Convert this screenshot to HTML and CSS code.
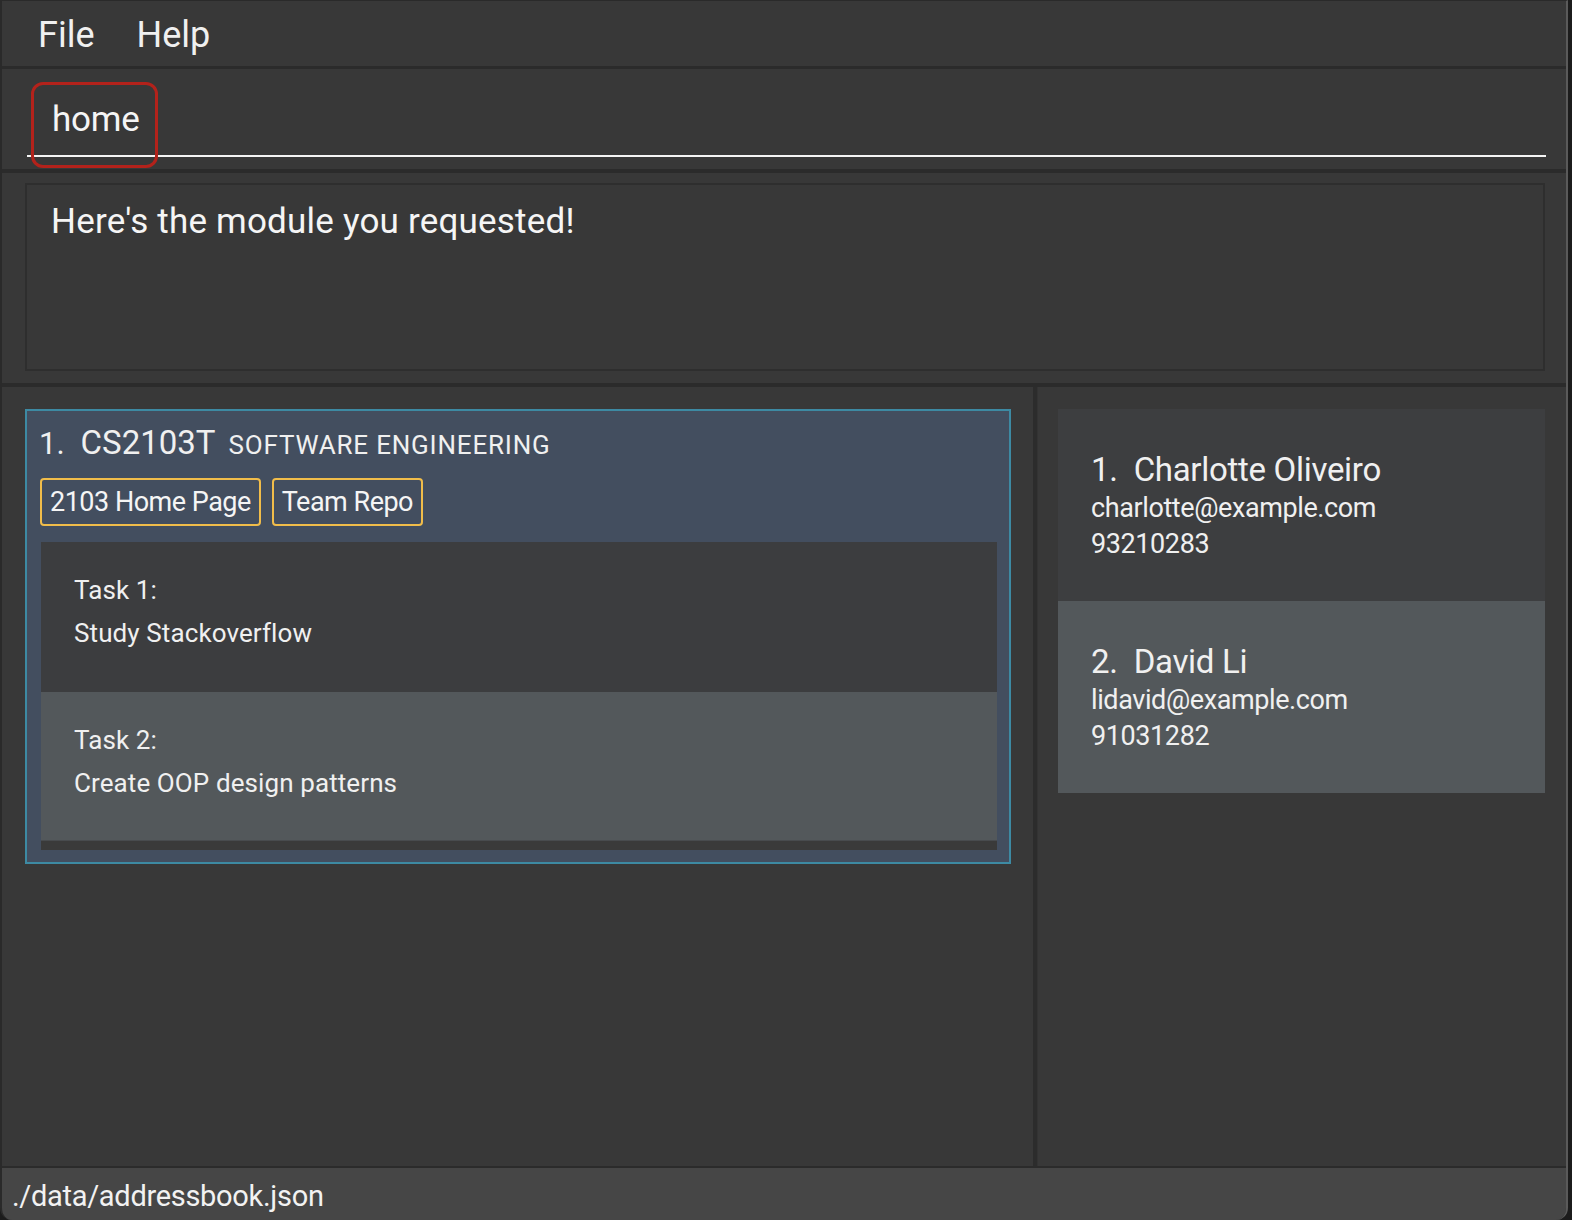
FILE: index.html
```html
<!DOCTYPE html>
<html>
<head>
<meta charset="utf-8">
<link rel="stylesheet" href="styles.css">
</head>
<body>
<div class="app">
  <div class="menubar">
    <span class="menu-item">File</span>
    <span class="menu-item">Help</span>
  </div>
  <div class="command-pane">
    <div class="command-field">
      <span class="command-text">home</span>
      <span class="highlight"></span>
    </div>
  </div>
  <div class="result-pane">
    <div class="result-box">Here's the module you requested!</div>
  </div>
  <div class="main">
    <div class="left-panel">
      <div class="module-card">
        <div class="module-title">
          <span class="module-index">1.</span>
          <span class="module-code">CS2103T</span>
          <span class="module-name">SOFTWARE ENGINEERING</span>
        </div>
        <div class="tags">
          <span class="tag">2103 Home Page</span>
          <span class="tag">Team Repo</span>
        </div>
        <div class="task-list">
          <div class="task odd">
            <div class="task-label">Task 1:</div>
            <div class="task-desc">Study Stackoverflow</div>
          </div>
          <div class="task even">
            <div class="task-label">Task 2:</div>
            <div class="task-desc">Create OOP design patterns</div>
          </div>
          <div class="task-rest"></div>
        </div>
      </div>
    </div>
    <div class="divider"></div>
    <div class="right-panel">
      <div class="person odd">
        <div class="person-name"><span class="person-index">1.</span>Charlotte Oliveiro</div>
        <div class="person-line">charlotte@example.com</div>
        <div class="person-line">93210283</div>
      </div>
      <div class="person even">
        <div class="person-name"><span class="person-index">2.</span>David Li</div>
        <div class="person-line">lidavid@example.com</div>
        <div class="person-line">91031282</div>
      </div>
    </div>
  </div>
  <div class="statusbar">./data/addressbook.json</div>
</div>
</body>
</html>
```

FILE: styles.css
```css
* { box-sizing: border-box; }
html, body { margin: 0; padding: 0; }
body {
  width: 1572px;
  height: 1220px;
  background: #1c1c1c;
  font-family: Roboto, "Liberation Sans", sans-serif;
  color: #f2f2f2;
  overflow: hidden;
}
.app {
  width: 1568px;
  height: 1220px;
  background: #383838;
  border-left: 2px solid #2a2a2a;
  border-right: 2px solid #5a5a5a;
  border-top: 1px solid #2a2a2a;
  border-bottom-left-radius: 12px;
  border-bottom-right-radius: 12px;
  display: flex;
  flex-direction: column;
  overflow: hidden;
}
.menubar {
  height: 68px;
  display: flex;
  align-items: center;
  gap: 42px;
  padding-left: 36px;
  padding-top: 3px;
  border-bottom: 3px solid #2b2b2b;
  flex: none;
}
.menu-item {
  font-size: 36px;
  color: #f0f0f0;
}
.command-pane {
  height: 104px;
  padding: 12px 20px 0 25px;
  border-bottom: 4px solid #2b2b2b;
  flex: none;
}
.command-field {
  position: relative;
  height: 76px;
  border-bottom: 2px solid #f4f4f4;
  padding-left: 25px;
  padding-top: 18px;
}
.command-text {
  font-size: 35px;
  letter-spacing: -0.2px;
  color: #f5f5f5;
}
.highlight {
  position: absolute;
  left: 4px;
  top: 1px;
  width: 127px;
  height: 86px;
  border: 3px solid #b3221b;
  border-radius: 12px;
}
.result-pane {
  height: 214px;
  padding: 10px 21px 10px 23px;
  border-bottom: 4px solid #2b2b2b;
  flex: none;
}
.result-box {
  height: 188px;
  border: 2px solid #2e2e2e;
  padding: 16px 24px;
  font-size: 35px;
  letter-spacing: 0.2px;
  color: #f5f5f5;
}
.main {
  flex: 1;
  display: flex;
  min-height: 0;
}
.left-panel {
  width: 1031px;
  padding: 22px 22px 0 23px;
  flex: none;
}
.divider {
  width: 5px;
  background: #2c2c2c;
  border-right: 1px solid #333;
  flex: none;
}
.right-panel {
  flex: 1;
  padding: 22px 21px 0 20px;
}
.module-card {
  background: #434e5f;
  border: 2px solid #3d8aa3;
  padding: 9px 13px 13px 12px;
  height: 455px;
}
.module-title {
  display: flex;
  align-items: baseline;
  height: 58px;
  padding-top: 3px;
}
.module-index {
  font-size: 31px;
  margin-right: 16px;
  color: #f0f0f0;
}
.module-code {
  font-size: 33px;
  letter-spacing: 0;
  margin-right: 13px;
  color: #f0f0f0;
}
.module-name {
  font-size: 26px;
  letter-spacing: 0.8px;
  color: #f0f0f0;
}
.tags {
  display: flex;
  gap: 11px;
  padding-left: 1px;
  margin-bottom: 16px;
}
.tag {
  height: 48px;
  display: flex;
  align-items: center;
  padding: 0 8px;
  border: 2px solid #f1bd4a;
  border-radius: 4px;
  font-size: 27px;
  letter-spacing: -0.5px;
  color: #f5f5f5;
}
.task-list {
  margin-left: 2px;
  width: 956px;
  background: #383838;
}
.task {
  height: 149px;
  padding: 33px 33px 0 33px;
}
.task.odd { background: #3c3d3f; height: 150px; }
.task.even { background: #53585b; border-bottom: 1px solid #484b4e; }
.task-label, .task-desc {
  font-size: 26px;
  letter-spacing: 0.1px;
  color: #f0f0f0;
  height: 43px;
}
.task-rest {
  height: 9px;
  background: #3a3a3a;
}
.person {
  height: 192px;
  padding: 41px 32px 0 33px;
}
.person.odd { background: #3d3e40; }
.person.even { background: #53585b; }
.person-name {
  font-size: 33px;
  letter-spacing: -0.3px;
  color: #f0f0f0;
  height: 42px;
}
.person-index {
  margin-right: 16px;
}
.person-line {
  font-size: 27px;
  letter-spacing: -0.4px;
  color: #f0f0f0;
  height: 36px;
}
.statusbar {
  height: 54px;
  flex: none;
  background: #464646;
  border-top: 2px solid #2b2b2b;
  padding-left: 10px;
  padding-top: 11px;
  font-size: 29px;
  letter-spacing: -0.3px;
  color: #f2f2f2;
}
```
